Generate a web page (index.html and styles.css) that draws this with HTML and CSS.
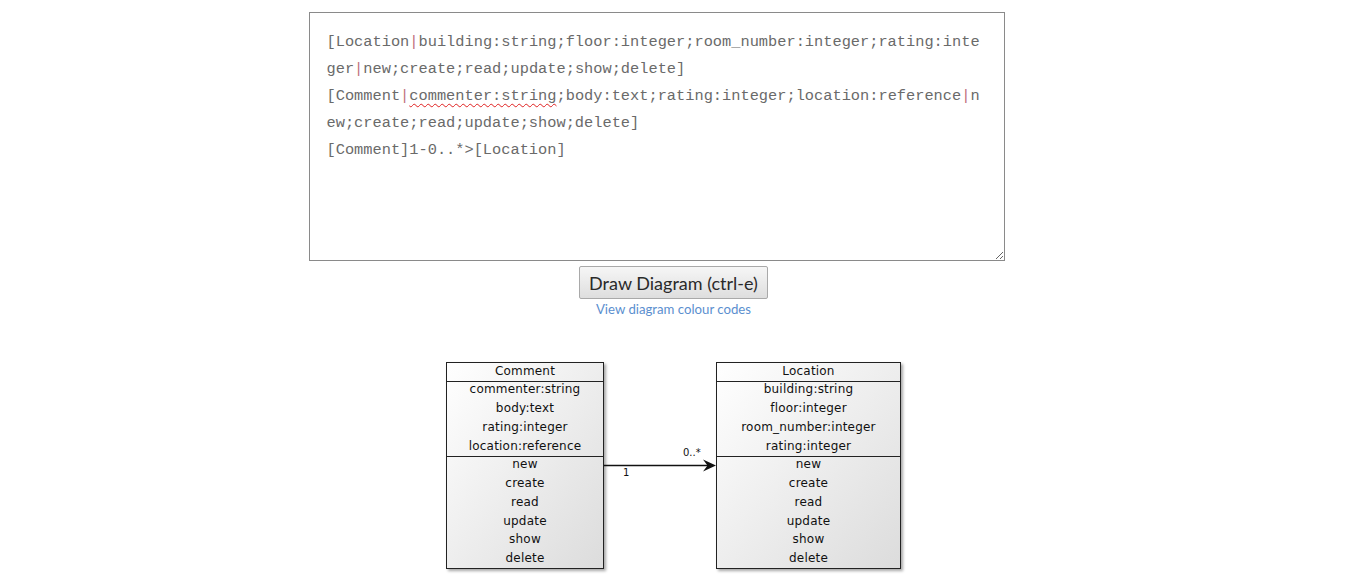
FILE: index.html
```html
<!DOCTYPE html>
<html>
<head>
<meta charset="utf-8">
<link rel="stylesheet" href="styles.css">
</head>
<body>
<div class="page">
  <div class="editor-wrap">
    <div class="editor"><div class="line">[Location<span class="pipe">|</span>building:string;floor:integer;room_number:integer;rating:integer<span class="pipe">|</span>new;create;read;update;show;delete]</div><div class="line">[Comment<span class="pipe">|</span><span class="typo">commenter:string</span>;body:text;rating:integer;location:reference<span class="pipe">|</span>new;create;read;update;show;delete]</div><div class="line">[Comment]1-0..*&gt;[Location]</div></div>
  </div>
  <div class="actions">
    <button class="draw-btn">Draw Diagram (ctrl-e)</button>
    <a class="codes-link" href="#">View diagram colour codes</a>
  </div>
  <div class="diagram">
    <svg width="470" height="220" viewBox="440 355 470 220" xmlns="http://www.w3.org/2000/svg">
      <defs>
        <linearGradient id="fill" x1="0" y1="0" x2="1" y2="1">
          <stop offset="0" stop-color="#ffffff"/>
          <stop offset="1" stop-color="#dcdcdc"/>
        </linearGradient>
        <filter id="shadow" x="-10%" y="-10%" width="130%" height="130%">
          <feGaussianBlur in="SourceAlpha" stdDeviation="1.5"/>
          <feOffset dx="2" dy="2" result="b"/>
          <feComponentTransfer><feFuncA type="linear" slope="0.35"/></feComponentTransfer>
          <feMerge><feMergeNode/><feMergeNode in="SourceGraphic"/></feMerge>
        </filter>
      </defs>
      <g class="cls">
        <rect x="446.5" y="362.5" width="157" height="206" fill="url(#fill)" stroke="#222" filter="url(#shadow)"/>
        <line x1="446.5" y1="381.5" x2="603.5" y2="381.5" stroke="#222"/>
        <line x1="446.5" y1="456.5" x2="603.5" y2="456.5" stroke="#222"/>
        <text x="525" y="374.5">Comment</text>
        <text x="525" y="393">commenter:string</text>
        <text x="525" y="412">body:text</text>
        <text x="525" y="431">rating:integer</text>
        <text x="525" y="449.5">location:reference</text>
        <text x="525" y="468">new</text>
        <text x="525" y="487">create</text>
        <text x="525" y="506">read</text>
        <text x="525" y="525">update</text>
        <text x="525" y="543">show</text>
        <text x="525" y="562">delete</text>
      </g>
      <g class="cls">
        <rect x="716.5" y="362.5" width="184" height="206" fill="url(#fill)" stroke="#222" filter="url(#shadow)"/>
        <line x1="716.5" y1="381.5" x2="900.5" y2="381.5" stroke="#222"/>
        <line x1="716.5" y1="456.5" x2="900.5" y2="456.5" stroke="#222"/>
        <text x="808.5" y="374.5">Location</text>
        <text x="808.5" y="393">building:string</text>
        <text x="808.5" y="412">floor:integer</text>
        <text x="808.5" y="431">room_number:integer</text>
        <text x="808.5" y="449.5">rating:integer</text>
        <text x="808.5" y="468">new</text>
        <text x="808.5" y="487">create</text>
        <text x="808.5" y="506">read</text>
        <text x="808.5" y="525">update</text>
        <text x="808.5" y="543">show</text>
        <text x="808.5" y="562">delete</text>
      </g>
      <line x1="604" y1="465.5" x2="712" y2="465.5" stroke="#111" stroke-width="1.3"/>
      <path d="M716 465.5 L703 459.5 L707.5 465.5 L703 471.5 Z" fill="#111"/>
      <text class="mult" x="623" y="476">1</text>
      <text class="mult" x="683" y="456">0..*</text>
    </svg>
  </div>
</div>
</body>
</html>
```

FILE: styles.css
```css
html, body {
  margin: 0;
  padding: 0;
  background: #ffffff;
}

.page {
  display: flex;
  flex-direction: column;
  align-items: center;
  padding-top: 12px;
}

.editor-wrap {
  width: 730px;
}

.editor {
  box-sizing: border-box;
  width: 696px;
  height: 249px;
  border: 1px solid #8a8a8a;
  padding: 16px 20px 0 17px;
  font-family: "Liberation Mono", "Courier New", monospace;
  font-size: 15.33px;
  line-height: 27px;
  color: #6a6a6a;
  white-space: pre-wrap;
  word-break: break-all;
  overflow: auto;
  resize: both;
}

.pipe {
  color: #c0707e;
}

.typo {
  text-decoration: underline wavy #e02020;
  text-decoration-thickness: 1px;
  text-underline-offset: 3px;
}

.actions {
  display: flex;
  flex-direction: column;
  align-items: center;
  margin-top: 5px;
}

.draw-btn {
  height: 33px;
  padding: 0 9.5px;
  font-family: "Source Sans Pro", Lato, "Liberation Sans", sans-serif;
  font-size: 18px;
  color: #2a2a2a;
  background: linear-gradient(#f6f6f6, #dedede);
  border: 1px solid #a9a9a9;
  border-radius: 2px;
}

.codes-link {
  margin-top: 1px;
  font-family: "Source Sans Pro", Lato, "Liberation Sans", sans-serif;
  font-size: 13.2px;
  line-height: 18px;
  color: #5b8fcf;
  text-decoration: none;
}

.diagram {
  margin-top: 37px;
  display: flex;
  justify-content: center;
  width: 100%;
}

.diagram svg {
  display: block;
  margin-left: 3px;
}

.cls text {
  font-family: "DejaVu Sans", sans-serif;
  font-size: 12px;
  letter-spacing: 0.2px;
  text-anchor: middle;
  fill: #111;
}

.mult {
  font-family: "DejaVu Sans", sans-serif;
  font-size: 10px;
  fill: #111;
}
```
